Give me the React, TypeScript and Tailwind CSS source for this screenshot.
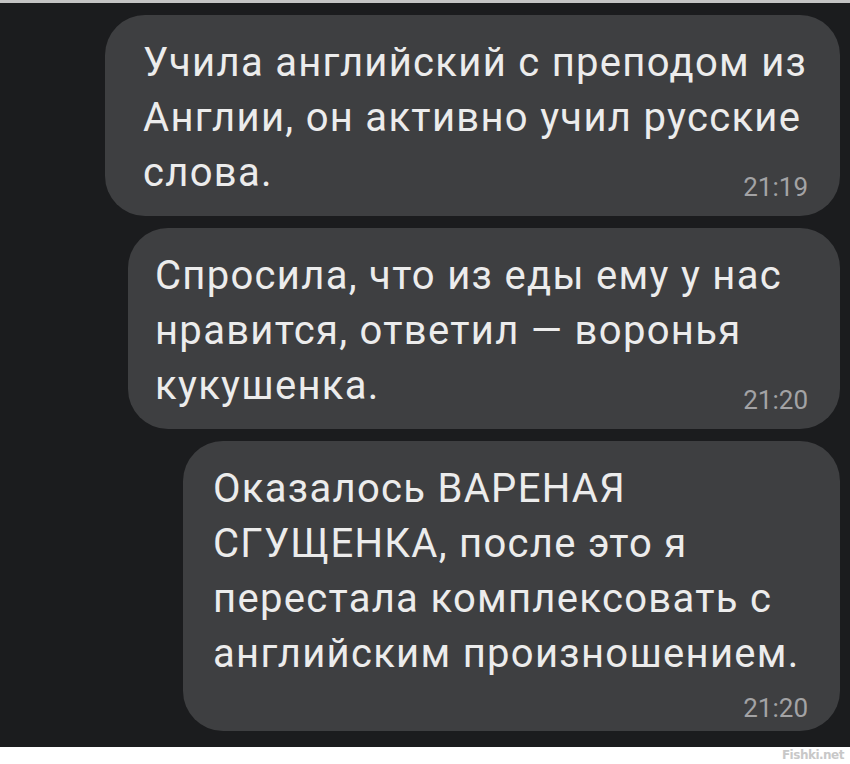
const MESSAGES = [
  {
    lines: ['Учила английский с преподом из', 'Англии, он активно учил русские', 'слова.'],
    time: '21:19',
    inline: true,
    box: 'ml-[105px] pl-[38px] pb-[16px]'
  },
  {
    lines: ['Спросила, что из еды ему у нас', 'нравится, ответил — воронья', 'кукушенка.'],
    time: '21:20',
    inline: true,
    box: 'ml-[128px] pl-[27px] pb-[16px]'
  },
  {
    lines: ['Оказалось ВАРЕНАЯ', 'СГУЩЕНКА, после это я', 'перестала комплексовать с', 'английским произношением.'],
    time: '21:20',
    inline: false,
    box: 'ml-[183px] pl-[30px] pb-[8px]'
  }
]

export default function App() {
  return (
    <div className="w-[850px] h-[764px] flex flex-col bg-white font-['Roboto',sans-serif]">
      <div className="h-[3px] bg-[#c4c4c4]" />
      <div className="h-[744px] bg-[#1b1c1e] flex flex-col gap-[12px] pt-3 pr-[10px]">
        {MESSAGES.map((msg, i) => (
          <div
            key={i}
            className={`${msg.box} rounded-[40px] bg-[#3e3f41] pr-[32px] pt-[20px] text-[#ececec]`}
          >
            {msg.lines.map((line, j) => {
              const last = j === msg.lines.length - 1
              if (last && msg.inline) {
                return (
                  <div key={j} className="flex items-end justify-between h-[55px]">
                    <span className="text-[40px] leading-[55px] tracking-[1.3px] whitespace-nowrap">{line}</span>
                    <span className="text-[26px] leading-[26px] text-[#a3a3a5]">{msg.time}</span>
                  </div>
                )
              }
              return (
                <div key={j} className="text-[40px] leading-[55px] tracking-[1.3px] whitespace-nowrap">
                  {line}
                </div>
              )
            })}
            {!msg.inline && (
              <div className="flex justify-end mt-[12px] text-[26px] leading-[30px] text-[#a3a3a5]">{msg.time}</div>
            )}
          </div>
        ))}
      </div>
      <div className="flex-1 flex justify-end items-end pr-[6px] pb-[2px]">
        <span className="text-[12px] leading-[14px] font-bold text-[#c8c8c8] font-['DejaVu_Sans',sans-serif] tracking-[-0.5px]">Fishki.net</span>
      </div>
    </div>
  )
}
